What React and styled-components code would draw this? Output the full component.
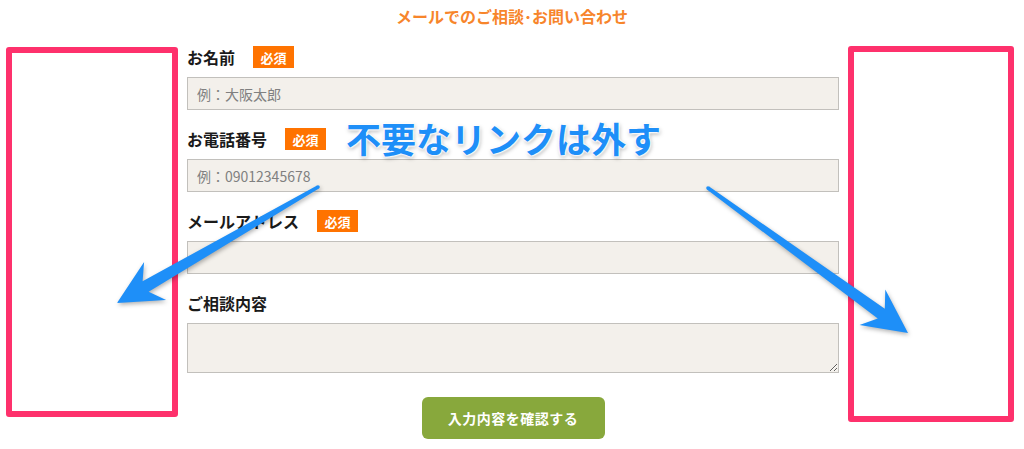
import React from "react";
import styled, { createGlobalStyle } from "styled-components";

const GlobalStyle = createGlobalStyle`
    html, body {
        margin: 0;
        padding: 0;
        background: #fff;
    }
    body {
        font-family: "Noto Sans CJK JP", "Liberation Sans", sans-serif;
        color: #222;
    }
`;

const Page = styled.div`
    position: relative;
    width: 1024px;
    height: 449px;
    overflow: hidden;
    background: #fff;
`;

const Title = styled.h2`
    margin: 0;
    box-sizing: border-box;
    height: 46px;
    padding-top: 6px;
    line-height: 20px;
    text-align: center;
    font-size: 16px;
    font-weight: 700;
    color: #f7852b;
`;

const Body = styled.div`
    display: flex;
    align-items: flex-start;
    gap: 9px;
    padding: 0 10px 0 6px;
`;

const SideBox = styled.div`
    box-sizing: border-box;
    flex: none;
    width: ${(p) => p.$w}px;
    height: ${(p) => p.$h}px;
    margin-top: ${(p) => p.$top || 0}px;
    border: 6px solid #fe316c;
    border-radius: 3px;
`;

const Form = styled.form`
    flex: none;
    width: 652px;
    display: flex;
    flex-direction: column;
`;

const Field = styled.div`
    margin-bottom: 18px;
`;

const LabelRow = styled.div`
    display: flex;
    align-items: center;
    height: 22px;
    margin-bottom: 9px;
`;

const Label = styled.label`
    font-size: 16px;
    font-weight: 700;
    color: #1a1a1a;
    line-height: 22px;
`;

const Badge = styled.span`
    display: inline-flex;
    align-items: center;
    justify-content: center;
    width: 41px;
    height: 22px;
    margin-left: 18px;
    background: #ff7300;
    color: #fff;
    font-size: 13px;
    font-weight: 700;
`;

const Input = styled.input`
    display: block;
    box-sizing: border-box;
    width: 100%;
    height: 33px;
    margin: 0;
    padding: 0 9px;
    border: 1px solid #c2c0bc;
    background: #f3f0eb;
    font-family: "Noto Sans CJK JP", sans-serif;
    font-size: 14px;
    color: #444;
    outline: none;
    &::placeholder {
        color: #808080;
    }
`;

const TextArea = styled.textarea`
    display: block;
    box-sizing: border-box;
    width: 100%;
    height: 50px;
    margin: 0;
    padding: 6px 9px;
    border: 1px solid #c2c0bc;
    background: #f3f0eb;
    font-family: "Noto Sans CJK JP", sans-serif;
    font-size: 14px;
    outline: none;
    resize: vertical;
`;

const Actions = styled.div`
    display: flex;
    justify-content: center;
    padding-top: 6px;
`;

const Submit = styled.button`
    width: 183px;
    height: 42px;
    border: none;
    border-radius: 6px;
    background: #88a83c;
    color: #fff;
    font-family: "Noto Sans CJK JP", sans-serif;
    font-size: 14px;
    font-weight: 700;
    letter-spacing: 0.5px;
    cursor: pointer;
`;

const Note = styled.div`
    position: absolute;
    left: 346px;
    top: 120px;
    font-size: 35px;
    line-height: 35px;
    font-weight: 700;
    color: #1e8ff8;
    white-space: nowrap;
    text-shadow: 0 0 2px #fff, 0 0 2px #fff, 1px 1px 2px #fff, -1px -1px 2px #fff,
        1px 2px 4px rgba(0, 0, 0, 0.35);
`;

const Overlay = styled.svg`
    position: absolute;
    left: 0;
    top: 0;
    pointer-events: none;
    filter: drop-shadow(1px 2px 2px rgba(0, 0, 0, 0.3));
`;

// tapered arrow like the ones a screenshot annotator draws
const arrowPoints = (tx, ty, px, py) => {
    const dx = px - tx;
    const dy = py - ty;
    const len = Math.hypot(dx, dy);
    const ux = dx / len;
    const uy = dy / len;
    const nx = -uy;
    const ny = ux;
    const at = (d, w) => `${(tx + ux * d + nx * w).toFixed(1)},${(ty + uy * d + ny * w).toFixed(1)}`;
    return [
        at(0, 1.8),
        at(len - 33, 6),
        at(len - 44, 22),
        at(len, 0),
        at(len - 44, -22),
        at(len - 33, -6),
        at(0, -1.8),
    ].join(" ");
};

const fields = [
    { label: "お名前", required: true, placeholder: "例：大阪太郎" },
    { label: "お電話番号", required: true, placeholder: "例：09012345678" },
    { label: "メールアドレス", required: true, placeholder: "" },
];

export default function App() {
    return (
        <Page>
            <GlobalStyle />
            <Title>メールでのご相談･お問い合わせ</Title>
            <Body>
                <SideBox $w={172} $h={370} $top={1} />
                <Form onSubmit={(e) => e.preventDefault()}>
                    {fields.map((f) => (
                        <Field key={f.label}>
                            <LabelRow>
                                <Label>{f.label}</Label>
                                {f.required && <Badge>必須</Badge>}
                            </LabelRow>
                            <Input placeholder={f.placeholder} />
                        </Field>
                    ))}
                    <Field>
                        <LabelRow>
                            <Label>ご相談内容</Label>
                        </LabelRow>
                        <TextArea />
                    </Field>
                    <Actions>
                        <Submit type="submit">入力内容を確認する</Submit>
                    </Actions>
                </Form>
                <SideBox $w={166} $h={376} />
            </Body>
            <Note>不要なリンクは外す</Note>
            <Overlay width="1024" height="449" viewBox="0 0 1024 449">
                <polygon points={arrowPoints(318, 187, 117, 303)} fill="#1e8ff8" />
                <circle cx="318" cy="187" r="1.8" fill="#1e8ff8" />
                <polygon points={arrowPoints(708, 188, 908, 333)} fill="#1e8ff8" />
                <circle cx="708" cy="188" r="1.8" fill="#1e8ff8" />
            </Overlay>
        </Page>
    );
}
